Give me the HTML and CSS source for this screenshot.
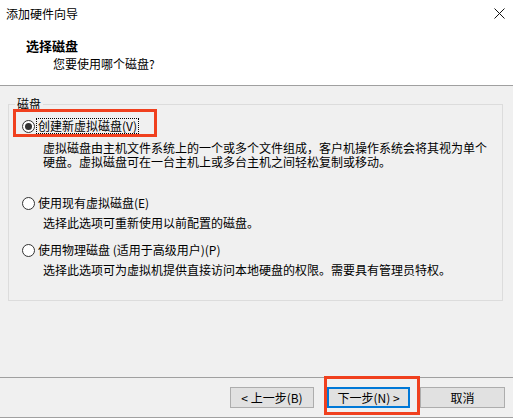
FILE: index.html
```html
<!DOCTYPE html>
<html lang="zh-CN">
<head>
<meta charset="utf-8">
<title>添加硬件向导</title>
<link rel="stylesheet" href="styles.css">
</head>
<body>
<div class="window">
  <div class="titlebar">
    <span class="title">添加硬件向导</span>
    <span class="close">
      <svg width="11" height="11" viewBox="0 0 11 11"><path d="M0.5 0.5 L10.5 10.5 M10.5 0.5 L0.5 10.5" stroke="#111" stroke-width="1" fill="none"/></svg>
    </span>
  </div>
  <div class="header">
    <div class="h-title">选择磁盘</div>
    <div class="h-sub">您要使用哪个磁盘?</div>
  </div>
  <div class="body">
    <fieldset class="group">
      <legend class="legend">磁盘</legend>
      <div class="option first">
        <div class="row">
          <span class="radio checked"></span>
          <span class="label focus">创建新虚拟磁盘(V)</span>
          <span class="mark mark-1"></span>
        </div>
        <div class="desc">虚拟磁盘由主机文件系统上的一个或多个文件组成，客户机操作系统会将其视为单个<br>硬盘。虚拟磁盘可在一台主机上或多台主机之间轻松复制或移动。</div>
      </div>
      <div class="option second">
        <div class="row">
          <span class="radio"></span>
          <span class="label">使用现有虚拟磁盘(E)</span>
        </div>
        <div class="desc">选择此选项可重新使用以前配置的磁盘。</div>
      </div>
      <div class="option third">
        <div class="row">
          <span class="radio"></span>
          <span class="label">使用物理磁盘 (适用于高级用户)(P)</span>
        </div>
        <div class="desc">选择此选项可为虚拟机提供直接访问本地硬盘的权限。需要具有管理员特权。</div>
      </div>
    </fieldset>
  </div>
  <div class="footer">
    <button class="btn btn-back">&lt; 上一步(B)</button>
    <button class="btn btn-next">下一步(N) &gt;<span class="mark mark-2"></span></button>
    <button class="btn btn-cancel">取消</button>
  </div>
</div>
</body>
</html>
```

FILE: styles.css
```css
html, body {
  margin: 0;
  padding: 0;
  width: 513px;
  height: 418px;
  overflow: hidden;
  background: #f0f0f0;
}

.window {
  width: 513px;
  height: 418px;
  display: flex;
  flex-direction: column;
  font-family: "Noto Sans CJK SC", "Liberation Sans", sans-serif;
  font-size: 12px;
  color: #000;
}

.titlebar {
  height: 30px;
  background: #fff;
  display: flex;
  align-items: center;
  justify-content: space-between;
  padding-left: 6px;
  box-sizing: border-box;
}

.title {
  line-height: 14px;
  margin-top: -3px;
}

.close {
  width: 46px;
  height: 30px;
  display: flex;
  align-items: center;
  justify-content: center;
  margin-right: -9px;
  margin-top: -4px;
}

.header {
  height: 56px;
  background: #fff;
  border-bottom: 1px solid #a0a0a0;
  box-sizing: border-box;
  padding-top: 9px;
}

.h-title {
  font-weight: bold;
  font-size: 13px;
  line-height: 13px;
  padding-left: 26px;
}

.h-sub {
  line-height: 13px;
  margin-top: 5px;
  padding-left: 53px;
}

.body {
  height: 291px;
  box-sizing: border-box;
  padding-top: 12px;
}

.group {
  margin: 0 10px 0 8px;
  border: 1px solid #dcdcdc;
  padding: 8px 0 23px 0;
  min-width: 0;
}

.legend {
  margin-left: 6px;
  padding: 0 2px;
  line-height: 12px;
}

.option.second {
  margin-top: 26px;
}

.option.third {
  margin-top: 12px;
}

.row {
  position: relative;
  height: 16px;
  display: flex;
  align-items: center;
  padding-left: 13px;
}

.radio {
  width: 13px;
  height: 13px;
  box-sizing: border-box;
  border: 1px solid #333;
  border-radius: 50%;
  background: #fff;
  position: relative;
  flex: none;
}

.radio.checked::after {
  content: "";
  position: absolute;
  left: 2px;
  top: 2px;
  width: 7px;
  height: 7px;
  border-radius: 50%;
  background: #333;
}

.label {
  line-height: 14px;
  margin-left: 2px;
  padding: 0 1px;
}

.label.focus {
  outline: 1px dotted #000;
  outline-offset: 0;
}

.desc {
  margin-top: 5px;
  padding-left: 34px;
  line-height: 14px;
}

.option.first .desc {
  margin-top: 7px;
}

.mark {
  position: absolute;
  box-sizing: border-box;
  border: 3px solid #f0401e;
  pointer-events: none;
}

.mark-1 {
  left: 4px;
  top: -9px;
  width: 144px;
  height: 28px;
}

.footer {
  flex: 1;
  border-top: 1px solid #a0a0a0;
  border-bottom: 1px solid #a0a0a0;
  box-sizing: border-box;
  display: flex;
  justify-content: flex-end;
  align-items: flex-start;
  padding-top: 9px;
  padding-right: 8px;
}

.btn {
  height: 21px;
  margin: 0;
  padding: 0;
  box-sizing: border-box;
  background: #e1e1e1;
  border: 1px solid #adadad;
  font-family: "Noto Sans CJK SC", "Liberation Sans", sans-serif;
  font-size: 12px;
  line-height: 14px;
  color: #000;
  position: relative;
}

.btn-back {
  width: 84px;
  margin-right: 13px;
}

.btn-next {
  width: 83px;
  margin-right: 10px;
  border: 2px solid #0078d7;
}

.btn-cancel {
  width: 85px;
}

.mark-2 {
  left: -5px;
  top: -13px;
  width: 96px;
  height: 39px;
}
```
